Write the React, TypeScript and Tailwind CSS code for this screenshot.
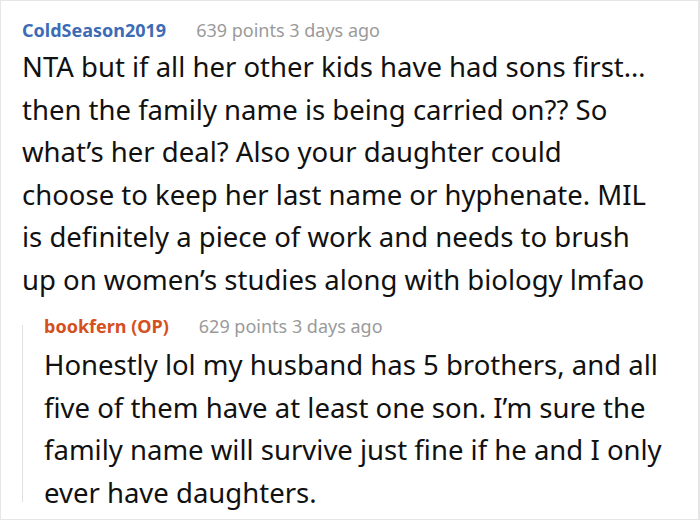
import React from "react";

const font = { fontFamily: '"Noto Sans", "Open Sans", sans-serif' };

function Header({ name, nameClass, meta }: { name: string; nameClass: string; meta: string }) {
  return (
    <div className="flex items-baseline text-[18px] leading-[24px]">
      <span className={`font-bold ${nameClass}`}>{name}</span>
      <span className="ml-[30px] text-[#9a9a9a]">{meta}</span>
    </div>
  );
}

export default function App() {
  return (
    <div
      style={font}
      className="w-[700px] h-[520px] overflow-hidden bg-white border-l border-t border-b border-r-2 border-[#e6e6e6] box-border pl-[21px] pt-[17px]"
    >
      <Header name="ColdSeason2019" nameClass="text-[#3d6bb6]" meta="639 points 3 days ago" />
      <p className="mt-[4px] text-[27.5px] leading-[42.5px] text-[#111] whitespace-nowrap">
        NTA but if all her other kids have had sons first…
        <br />
        then the family name is being carried on?? So
        <br />
        what’s her deal? Also your daughter could
        <br />
        choose to keep her last name or hyphenate. MIL
        <br />
        is definitely a piece of work and needs to brush
        <br />
        up on women’s studies along with biology lmfao
      </p>
      <div className="flex mt-[13px]">
        <div className="w-px bg-[#e0e0e0] mt-[11px] mb-[12px]" />
        <div className="pl-[21px]">
          <Header name="bookfern (OP)" nameClass="text-[#d4501e]" meta="629 points 3 days ago" />
          <p className="mt-[6px] text-[27.5px] leading-[42.5px] text-[#111] whitespace-nowrap">
            Honestly lol my husband has 5 brothers, and all
            <br />
            five of them have at least one son. I’m sure the
            <br />
            family name will survive just fine if he and I only
            <br />
            ever have daughters.
          </p>
        </div>
      </div>
    </div>
  );
}
